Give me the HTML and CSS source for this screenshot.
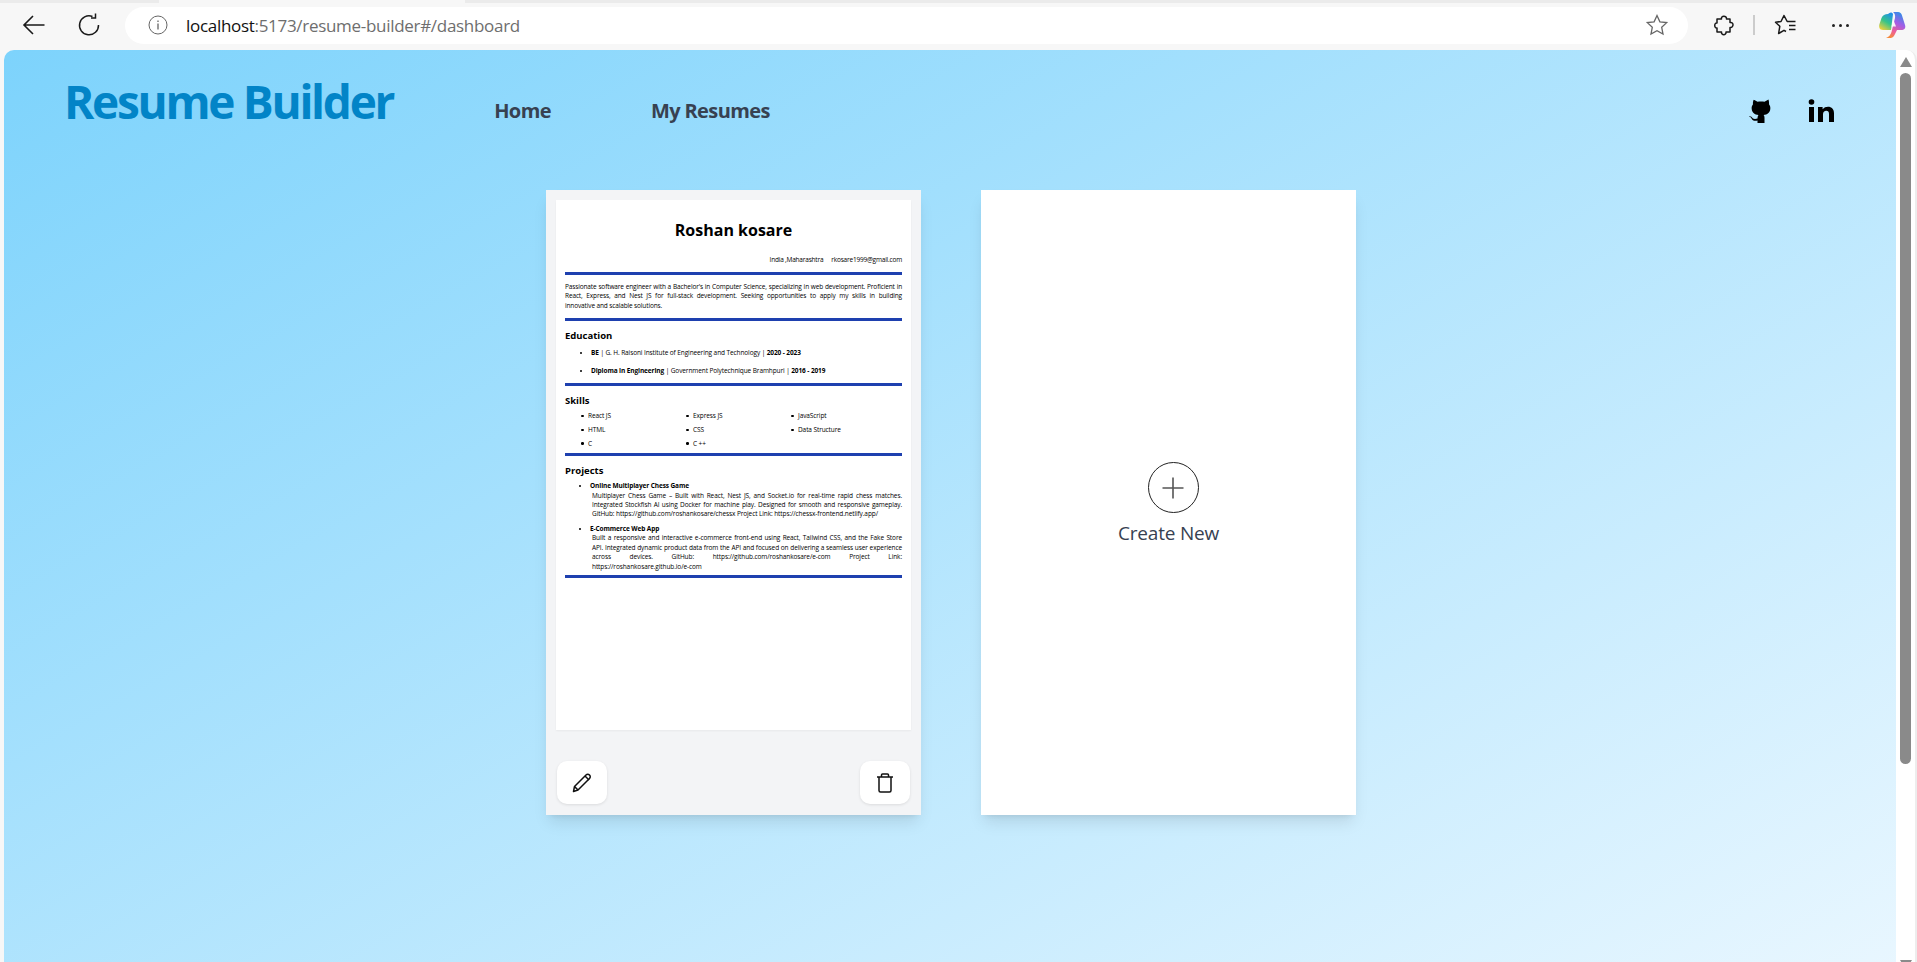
FILE: index.html
```html
<!DOCTYPE html>
<html lang="en">
<head>
    <meta charset="UTF-8">
    <title>Resume Builder</title>
    <link rel="stylesheet" href="styles.css">
</head>
<body>
<div class="tabstrip">
    <span class="tab-left"></span>
    <span class="tab-on"></span>
    <span class="tab-right"></span>
</div>
<div class="toolbar">
    <svg class="tool-btn back" width="24" height="24" viewBox="0 0 24 24" fill="none" stroke="#1a1a1a" stroke-width="1.6"><path d="M22.500 12H2M11 3l-9 9 9 9"/></svg>
    <svg class="tool-btn reload" width="24" height="24" viewBox="0 0 24 24" fill="none" stroke="#1a1a1a" stroke-width="1.5"><path d="M15.500 3.500A9.500 9.500 0 1 0 21.500 12"/><path d="M15.500 0.500v4.500h-4.500" transform="translate(3 0)"/></svg>
    <div class="urlbar">
        <svg width="20" height="20" viewBox="0 0 20 20" fill="none" stroke="#666"><circle cx="10" cy="10" r="9"/><path d="M10 8.500v6M10 5.500v1.500" stroke-width="1.300"/></svg>
        <div class="url"><span class="host">localhost</span>:5173/resume-builder#/dashboard</div>
        <svg class="star" width="24" height="24" viewBox="0 0 24 24" fill="none" stroke="#666" stroke-width="1.300"><path d="M12 2.500l2.900 6.300 6.800.8-5 4.700 1.300 6.800-6-3.400-6 3.400 1.300-6.800-5-4.700 6.800-.8z"/></svg>
    </div>
    <div class="tools">
        <svg class="puzzle" width="22" height="22" viewBox="0 0 22 22" fill="none" stroke="#1a1a1a" stroke-width="1.500" stroke-linejoin="round"><path d="M8.500 5C7.500 1.500 14 1 13.500 5H17V8.500C21 7.500 21 14 17 13.500V18H13C13.500 21.500 8 21.500 8.500 18H4V14C1 14.500 1 8.500 4 9V5z"/></svg>
        <span class="tool-sep"></span>
        <svg class="favs" width="24" height="24" viewBox="0 0 24 24" fill="none" stroke="#1a1a1a" stroke-width="1.500" stroke-linejoin="round"><path d="M21.500 8.500H13.200L10 2.500L7 8.500L1.500 9.200L5.800 13.300L4.600 20.500L10 17.300L12 18.500M15 12.500h6.500M15 16.500h6.500"/></svg>
        <div class="dots"><span></span><span></span><span></span></div>
        <svg class="copilot" width="28" height="28" viewBox="0 0 28 28">
            <defs>
                <linearGradient id="cop-left" x1="0.700" y1="0" x2="0.200" y2="1">
                    <stop offset="0" stop-color="#1f8fe8"/>
                    <stop offset="0.500" stop-color="#35c48a"/>
                    <stop offset="1" stop-color="#f4d03a"/>
                </linearGradient>
                <linearGradient id="cop-right" x1="0.700" y1="0" x2="0.300" y2="1">
                    <stop offset="0" stop-color="#2f8de8"/>
                    <stop offset="0.400" stop-color="#a25ee6"/>
                    <stop offset="0.750" stop-color="#ee5f96"/>
                    <stop offset="1" stop-color="#f58a3c"/>
                </linearGradient>
            </defs>
            <path d="M10 3C12 1 14 1 15 3L13 19H5C1.500 19 0.500 16 1.500 13L3.500 7C4.500 4.500 7 3 10 3z" fill="url(#cop-left)"/>
            <path d="M15 1H20C22 1 23.500 2.500 24 4.500L27 14C28 17 26.500 19 23 19H19L16.500 24C15.500 26.500 13.500 27 11 27H8C11 26 12.500 24 13.500 21L17 7C17.500 4 16.500 2 15 1z" fill="url(#cop-right)"/>
            <path d="M15.500 9L18 15.500H13.500z" fill="#fff" opacity="0.900"/>
        </svg>
    </div>
</div>

<div class="viewport">
    <div class="app">
        <div class="app-inner">
            <header class="topbar">
                <h1 class="logo">Resume Builder</h1>
                <nav class="nav">
                    <a href="#">Home</a>
                    <a href="#">My Resumes</a>
                </nav>
                <div class="social">
                    <svg width="26" height="26" viewBox="0 0 26 26" fill="#000"><path d="M5.500 1.500l4 2.300c2-.5 5-.5 7 0l4-2.300c.6 2 .7 3.500.5 4.700 1.200 1.500 1.500 3 1.300 4.800-.5 4-3 5.500-6.800 6 .8.800 1 1.700 1 3v5h-7v-2.500c-2.500.7-5.200.3-6-2-.4-1-1.400-1.700-2.800-2 2-.5 3 .5 4 1.700.8.700 2.500 1 4.800.3 0-1 .2-2.500 1-3.500-3.800-.5-6.300-2-6.800-6-.2-1.800.1-3.300 1.300-4.800-.2-1.200-.1-2.700.7-4.700z"/></svg>
                    <svg width="26" height="26" viewBox="0 0 26 26" fill="#000"><circle cx="3.500" cy="4" r="2.800"/><path d="M1 9h5v15H1zM10 9h4.600v2.200C16 9.500 17.800 8.700 20 8.700c3.700 0 6 2.400 6 6.600V24h-5v-8c0-2.200-1-3.300-2.700-3.300-2 0-3.300 1.300-3.300 3.500V24h-5z"/></svg>
                </div>
            </header>

            <main class="cards">
                <section class="card card-resume">
                    <article class="sheet">
                        <h2 class="name">Roshan kosare</h2>
                        <div class="contact"><span>India ,Maharashtra</span><span>rkosare1999@gmail.com</span></div>
                        <hr class="rule">
                        <p class="summary"><span class="summary-top">Passionate software engineer with a Bachelor's in Computer Science, specializing in web development. Proficient in React, Express, and Nest JS for full-stack development. Seeking opportunities to apply my skills in building</span> innovative and scalable solutions.</p>
                        <hr class="rule">
                        <h3 class="sec-title">Education</h3>
                        <ul class="edu">
                            <li><b>BE</b> | G. H. Raisoni Institute of Engineering and Technology | <b>2020 - 2023</b></li>
                            <li><b>Diploma in Engineering</b> | Government Polytechnique Bramhpuri | <b>2016 - 2019</b></li>
                        </ul>
                        <hr class="rule">
                        <h3 class="sec-title">Skills</h3>
                        <ul class="skills">
                            <li>React JS</li>
                            <li>Express JS</li>
                            <li>JavaScript</li>
                            <li>HTML</li>
                            <li>CSS</li>
                            <li>Data Structure</li>
                            <li>C</li>
                            <li>C ++</li>
                        </ul>
                        <hr class="rule">
                        <h3 class="sec-title">Projects</h3>
                        <ul class="projects">
                            <li>
                                <b>Online Multiplayer Chess Game</b>
                                <p>Multiplayer Chess Game – Built with React, Nest JS, and Socket.io for real-time rapid chess matches. Integrated Stockfish AI using Docker for machine play. Designed for smooth and responsive gameplay. GitHub: https://github.com/roshankosare/chessx Project Link: https://chessx-frontend.netlify.app/</p>
                            </li>
                            <li>
                                <b>E-Commerce Web App</b>
                                <p>Built a responsive and interactive e-commerce front-end using React, Tailwind CSS, and the Fake Store API. Integrated dynamic product data from the API and focused on delivering a seamless user experience across devices. GitHub: https://github.com/roshankosare/e-com Project Link: https://roshankosare.github.io/e-com</p>
                            </li>
                        </ul>
                        <hr class="rule">
                    </article>
                    <div class="actions">
                        <button class="icon-btn">
                            <svg width="22" height="22" viewBox="0 0 22 22" fill="none" stroke="#111" stroke-width="1.500" stroke-linejoin="round"><path d="M2.500 19.500l1-5L15 3c1-1 2.500-1 3.500 0s1 2.500 0 3.500L7 18z"/><path d="M3.500 14.500L7 18M14 4l4 4"/></svg>
                        </button>
                        <button class="icon-btn">
                            <svg width="22" height="22" viewBox="0 0 22 22" fill="none" stroke="#111" stroke-width="1.500" stroke-linejoin="round"><path d="M3 5h16M5 5v13.500c0 1 .5 1.500 1.500 1.500h9c1 0 1.500-.5 1.500-1.500V5M7.500 5V3c0-.6.400-1 1-1h5c.6 0 1 .4 1 1v2"/></svg>
                        </button>
                    </div>
                </section>

                <section class="card card-new">
                    <div class="plus">
                        <svg width="24" height="24" viewBox="0 0 24 24" stroke="#555" stroke-width="1.600"><path d="M12 1.500v21M1.500 12h21"/></svg>
                    </div>
                    <div class="new-label">Create New</div>
                </section>
            </main>
        </div>
    </div>
    <div class="scrollbar">
        <span class="arrow"></span>
        <span class="thumb"></span>
        <span class="arrow arrow-down"></span>
    </div>
</div>
</body>
</html>
```

FILE: styles.css
```css
* {
    box-sizing: border-box;
}

html, body {
    margin: 0;
    padding: 0;
    height: 100%;
    overflow: hidden;
}

body {
    font-family: "Open Sans", "Noto Sans", sans-serif;
    background-color: #f7f7f7;
    display: flex;
    flex-direction: column;
}

/* browser chrome */
.tabstrip {
    height: 3px;
    display: flex;
    background-color: #ebebeb;
}

.tab-left {
    width: 159px;
}

.tab-on {
    width: 306px;
    background-color: #f7f7f7;
}

.toolbar {
    height: 47px;
    display: flex;
    align-items: center;
    padding: 0 0 3px 22px;
}

.reload {
    margin-left: 31px;
}

.urlbar {
    width: 1563px;
    height: 37px;
    margin-left: 24px;
    padding: 0 19px 0 23px;
    background-color: #fff;
    border-radius: 19px;
    display: flex;
    align-items: center;
}

.url {
    flex: 1;
    margin-left: 18px;
    padding-top: 1px;
    font-size: 17px;
    letter-spacing: -0.3px;
    color: #6e6e6e;
}

.host {
    color: #111;
}

.tools {
    display: flex;
    align-items: center;
    margin-left: 25px;
}

.tool-sep {
    width: 2px;
    height: 20px;
    margin: 0 19px 0 18px;
    background-color: #ccc;
}

.dots {
    display: flex;
    gap: 4px;
    margin-left: 34px;
}

.dots span {
    width: 3px;
    height: 3px;
    border-radius: 50%;
    background-color: #222;
}

.copilot {
    margin-left: 29px;
}

.viewport {
    flex: 1;
    display: flex;
    min-height: 0;
    padding-left: 4px;
}

.app {
    flex: 1;
    overflow: hidden;
    border-top-left-radius: 10px;
}

.app-inner {
    height: 1060px;
    background: linear-gradient(to bottom right, #7dd3fc, #f0f9ff);
}

.scrollbar {
    width: 21px;
    background-color: #fff;
    border-right: 2px solid #ededed;
    border-top-right-radius: 10px;
    display: flex;
    flex-direction: column;
    align-items: center;
    padding-top: 7px;
}

.arrow {
    width: 0;
    height: 0;
    border-left: 6px solid transparent;
    border-right: 6px solid transparent;
    border-bottom: 10px solid #8a8a8a;
}

.arrow-down {
    margin-top: auto;
    margin-bottom: -8px;
    border-bottom: 0;
    border-top: 10px solid #8a8a8a;
}

.thumb {
    width: 11px;
    height: 691px;
    margin-top: 6px;
    border-radius: 6px;
    background-color: #8a8a8a;
}

/* page */
.topbar {
    display: flex;
    align-items: flex-start;
    padding: 21px 62px 0 60px;
}

.logo {
    margin: 0;
    font-size: 46px;
    line-height: 60px;
    font-weight: 700;
    letter-spacing: -2.3px;
    color: #0284c7;
}

.nav {
    display: flex;
    gap: 100px;
    margin-left: 101px;
    padding-top: 26px;
}

.nav a {
    font-size: 20px;
    line-height: 28px;
    font-weight: 700;
    letter-spacing: -0.6px;
    color: #374151;
    text-decoration: none;
}

.social {
    margin-left: auto;
    display: flex;
    gap: 34px;
    padding-top: 27px;
}

.cards {
    display: flex;
    justify-content: center;
    gap: 60px;
    margin-top: 59px;
    padding-left: 2px;
}

.card {
    width: 375px;
    height: 625px;
    box-shadow: 0 10px 15px -3px rgba(0, 0, 0, 0.1), 0 4px 6px -4px rgba(0, 0, 0, 0.1);
}

.card-resume {
    background-color: #f3f4f6;
    padding: 10px;
    display: flex;
    flex-direction: column;
}

.sheet {
    height: 530px;
    padding: 18px 9px 0;
    background-color: #fff;
    color: #000;
    font-size: 6.500px;
    line-height: 9.700px;
    letter-spacing: -0.1px;
    box-shadow: 0 1px 2px rgba(0, 0, 0, 0.05);
}

.name {
    margin: 0;
    font-size: 16px;
    line-height: 24px;
    letter-spacing: 0;
    text-align: center;
}

.contact {
    display: flex;
    justify-content: flex-end;
    gap: 8px;
    margin-top: 13px;
    margin-bottom: 7px;
    letter-spacing: -0.2px;
}

.rule {
    height: 3px;
    margin: 4px 0;
    border: 0;
    background-color: #1e40af;
}

.summary {
    margin: 7px 0 7px;
    letter-spacing: -0.13px;
    text-align: justify;
}

.summary-top {
    display: block;
    text-align-last: justify;
}

.sec-title {
    margin: 8px 0 4px;
    font-size: 9.500px;
    line-height: 13px;
    letter-spacing: 0;
}

.edu, .skills, .projects {
    margin: 0;
    padding: 0 0 0 26px;
}

.edu {
    margin-top: 6px;
}

.edu li {
    margin-bottom: 8px;
}

.skills {
    display: grid;
    grid-template-columns: repeat(3, 105px);
    row-gap: 4px;
    margin-bottom: 4.500px;
    padding-left: 16px;
    list-style: none;
}

.skills li {
    display: flex;
    align-items: center;
    gap: 4.500px;
}

.skills li::before {
    content: "";
    width: 2.500px;
    height: 2.500px;
    border-radius: 50%;
    background-color: #000;
}

.projects {
    padding-left: 25px;
}

.projects li {
    margin-bottom: 5px;
}

.projects li:last-child {
    margin-bottom: 0;
}

.projects p {
    margin: 0 0 0 2px;
    line-height: 9.400px;
    text-align: justify;
}

.actions {
    display: flex;
    justify-content: space-between;
    margin-top: 31px;
    padding: 0 1px;
}

.icon-btn {
    width: 50px;
    height: 43px;
    border: 0;
    border-radius: 10px;
    background-color: #fff;
    box-shadow: 0 1px 3px rgba(0, 0, 0, 0.1);
    display: flex;
    align-items: center;
    justify-content: center;
    padding: 0;
}

.card-new {
    background-color: #fff;
    display: flex;
    flex-direction: column;
    align-items: center;
    padding-top: 272px;
}

.plus {
    width: 51px;
    height: 51px;
    margin-left: 9px;
    border: 1.500px solid #222;
    border-radius: 50%;
    display: flex;
    align-items: center;
    justify-content: center;
}

.new-label {
    margin-top: 6px;
    font-size: 19px;
    line-height: 28px;
    letter-spacing: -0.2px;
    color: #374151;
}
```
